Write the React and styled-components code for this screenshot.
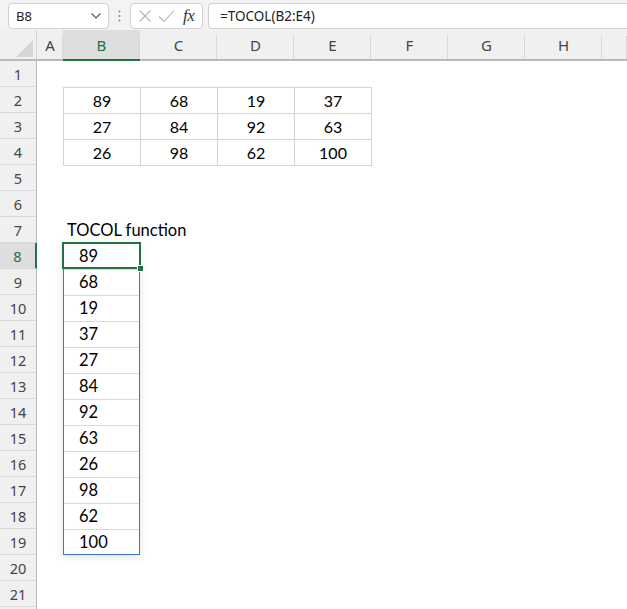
import React from "react";
import styled, { createGlobalStyle } from "styled-components";

const Global = createGlobalStyle`
  html, body { margin: 0; padding: 0; background: #ffffff; }
  body { width: 627px; height: 609px; overflow: hidden; }
  * { box-sizing: border-box; }
`;

const GREEN = "#217346";
const BLUE = "#3b73d1";
const UI_FONT = `"Noto Sans", "Open Sans", "Liberation Sans", sans-serif`;
const CELL_FONT = `Lato, "Liberation Sans", sans-serif`;

const Page = styled.div`
  width: 627px;
  height: 609px;
  overflow: hidden;
  display: flex;
  flex-direction: column;
  background: #fff;
`;

const TopBar = styled.div`
  height: 30px;
  flex: 0 0 30px;
  background: #f3f3f3;
  display: flex;
  align-items: flex-start;
  padding: 3px 0 0 8px;
`;

const Box = styled.div`
  height: 26px;
  background: #fff;
  border: 1px solid #d1d1d1;
  border-radius: 4px;
  display: flex;
  align-items: center;
`;

const NameBox = styled(Box)`
  width: 101px;
  padding: 0 6px 0 7px;
  justify-content: space-between;
  font-family: ${UI_FONT};
  font-size: 13px;
  color: #222;
`;

const Dots = styled.div`
  width: 21px;
  height: 26px;
  display: flex;
  align-items: center;
  justify-content: center;
`;

const FxBox = styled(Box)`
  width: 73px;
  padding: 0 6px 0 7px;
  gap: 6px;
`;

const FxText = styled.span`
  font-family: "Liberation Serif", "DejaVu Serif", serif;
  font-style: italic;
  font-size: 17px;
  color: #333;
  margin-left: 2px;
  letter-spacing: -0.5px;
`;

const FormulaBox = styled(Box)`
  flex: 1;
  margin-left: 5px;
  border-right: none;
  border-radius: 4px 0 0 4px;
  padding-left: 11px;
  font-family: ${UI_FONT};
  font-size: 13.5px;
  color: #222;
`;

const Sheet = styled.div`
  display: grid;
  grid-template-columns: 37px 26px repeat(7, 77px) 1fr;
  grid-template-rows: 31px repeat(22, 26px);
  position: relative;
`;

const Corner = styled.div`
  grid-column: 1;
  grid-row: 1;
  background: #f0f0f0;
  border-right: 1px solid #d4d4d4;
  border-bottom: 2px solid #b9b9b9;
  display: flex;
  align-items: flex-end;
  justify-content: flex-end;
  padding: 0 3px 2px 0;
`;

const ColHead = styled.div`
  background: ${(p) => (p.$sel ? "#dedede" : "#f0f0f0")};
  border-bottom: 2px solid ${(p) => (p.$sel ? GREEN : "#b9b9b9")};
  font-family: ${UI_FONT};
  font-size: 15px;
  color: ${(p) => (p.$sel ? GREEN : "#444")};
  display: flex;
  align-items: center;
  justify-content: center;
  position: relative;
  padding-top: 1px;
  &::after {
    content: "";
    position: absolute;
    right: 0;
    top: 6px;
    bottom: 0;
    width: 1px;
    background: #d8d8d8;
  }
`;

const RowHead = styled.div`
  grid-column: 1;
  background: ${(p) => (p.$sel ? "#dedede" : "#f0f0f0")};
  border-right: ${(p) => (p.$sel ? `2px solid ${GREEN}` : "1px solid #b9b9b9")};
  border-bottom: 1px solid #d8d8d8;
  font-family: ${UI_FONT};
  font-size: 14.5px;
  color: ${(p) => (p.$sel ? GREEN : "#444")};
  display: flex;
  align-items: center;
  justify-content: center;
`;

const TableCell = styled.div`
  border-left: 1px solid #d4d4d4;
  border-top: 1px solid #d4d4d4;
  box-shadow: ${(p) =>
    [p.$lastCol ? "1px 0 0 #d4d4d4" : null, p.$lastRow ? "0 1px 0 #d4d4d4" : null, p.$lastCol && p.$lastRow ? "1px 1px 0 #d4d4d4" : null]
      .filter(Boolean)
      .join(", ") || "none"};
  font-family: ${CELL_FONT};
  font-size: 16px;
  color: #000;
  display: flex;
  align-items: center;
  justify-content: center;
  padding-top: 0px;
`;

const Label = styled.div`
  grid-column: 3 / span 3;
  font-family: ${CELL_FONT};
  font-size: 16.5px;
  color: #000;
  display: flex;
  align-items: flex-end;
  padding: 0 0 3px 4px;
  white-space: nowrap;
`;

const SpillCell = styled.div`
  grid-column: 3;
  border-top: ${(p) => (p.$first ? "none" : "1px solid #d9d9d9")};
  font-family: ${CELL_FONT};
  font-size: 16.5px;
  color: #000;
  display: flex;
  align-items: center;
  padding: 0 0 1px 16px;
`;

const SpillFrame = styled.div`
  grid-column: 3;
  grid-row: 9 / 21;
  border: 1px solid ${BLUE};
  box-shadow: 0 2px 8px rgba(0, 0, 0, 0.12);
  pointer-events: none;
  z-index: 1;
`;

const Selection = styled.div`
  grid-column: 3;
  grid-row: 9;
  margin: -1px -1px 0 -1px;
  border: 2px solid ${GREEN};
  position: relative;
  pointer-events: none;
  z-index: 2;
`;

const FillHandle = styled.div`
  position: absolute;
  right: -5px;
  bottom: -5px;
  width: 7px;
  height: 7px;
  background: ${GREEN};
  border: 1px solid #fff;
`;

const cols = ["A", "B", "C", "D", "E", "F", "G", "H", ""];
const table = [
  [89, 68, 19, 37],
  [27, 84, 92, 63],
  [26, 98, 62, 100],
];
const spill = [89, 68, 19, 37, 27, 84, 92, 63, 26, 98, 62, 100];

export default function App() {
  return (
    <Page>
      <Global />
      <TopBar>
        <NameBox>
          <span>B8</span>
          <svg width="12" height="8" viewBox="0 0 12 8">
            <path d="M1.5 1.5 L6 6 L10.5 1.5" fill="none" stroke="#555" strokeWidth="1.2" />
          </svg>
        </NameBox>
        <Dots>
          <svg width="3" height="12" viewBox="0 0 3 12">
            <circle cx="1.5" cy="1.5" r="1" fill="#888" />
            <circle cx="1.5" cy="6" r="1" fill="#888" />
            <circle cx="1.5" cy="10.5" r="1" fill="#888" />
          </svg>
        </Dots>
        <FxBox>
          <svg width="14" height="14" viewBox="0 0 14 14">
            <path d="M1.5 1.5 L12.5 12.5 M12.5 1.5 L1.5 12.5" stroke="#b5b5b5" strokeWidth="1.1" fill="none" />
          </svg>
          <svg width="17" height="14" viewBox="0 0 17 14">
            <path d="M1 7.5 L6 12.5 L16 1.5" stroke="#b5b5b5" strokeWidth="1.1" fill="none" />
          </svg>
          <FxText>fx</FxText>
        </FxBox>
        <FormulaBox>=TOCOL(B2:E4)</FormulaBox>
      </TopBar>
      <Sheet>
        <Corner>
          <svg width="17" height="17" viewBox="0 0 17 17">
            <path d="M17 0 L17 17 L0 17 Z" fill="#d6d6d6" />
          </svg>
        </Corner>
        {cols.map((c, i) => (
          <ColHead key={i} $sel={c === "B"} style={{ gridColumn: i + 2, gridRow: 1 }}>
            {c}
          </ColHead>
        ))}
        {Array.from({ length: 22 }, (_, i) => (
          <RowHead key={i} $sel={i + 1 === 8} style={{ gridRow: i + 2 }}>
            {i < 21 ? i + 1 : ""}
          </RowHead>
        ))}
        {table.map((row, r) =>
          row.map((v, c) => (
            <TableCell
              key={`${r}-${c}`}
              $lastCol={c === 3}
              $lastRow={r === 2}
              style={{ gridColumn: c + 3, gridRow: r + 3 }}
            >
              {v}
            </TableCell>
          ))
        )}
        <Label style={{ gridRow: 8 }}>TOCOL function</Label>
        {spill.map((v, i) => (
          <SpillCell key={i} $first={i === 0} style={{ gridRow: i + 9 }}>
            {v}
          </SpillCell>
        ))}
        <SpillFrame />
        <Selection>
          <FillHandle />
        </Selection>
      </Sheet>
    </Page>
  );
}
